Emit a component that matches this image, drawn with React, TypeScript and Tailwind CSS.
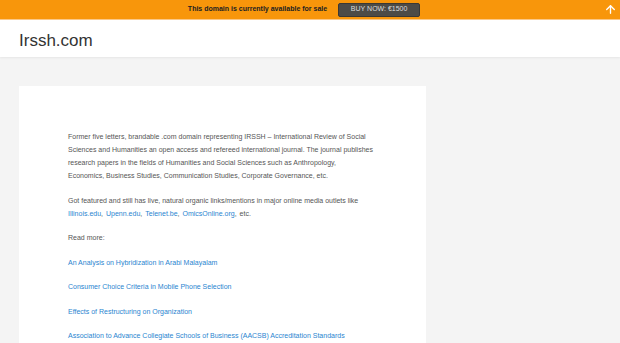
import { ArrowUp } from 'lucide-react';

const links = [
  'An Analysis on Hybridization in Arabi Malayalam',
  'Consumer Choice Criteria in Mobile Phone Selection',
  'Effects of Restructuring on Organization',
  'Association to Advance Collegiate Schools of Business (AACSB) Accreditation Standards',
];

const outlets = ['Illinois.edu', 'Upenn.edu', 'Telenet.be', 'OmicsOnline.org'];

export default function App() {
  return (
    <div className="min-h-[343px] bg-[#f4f4f4] font-['Liberation_Sans',Arial,sans-serif]">
      {/* sale banner */}
      <div className="relative h-[20px] bg-[#f8960b] flex items-center justify-center gap-[11px] pr-[12px] border-b border-[#fbc888]">
        <span className="text-[7px] font-bold text-[#222]">This domain is currently available for sale</span>
        <span className="h-[14px] w-[82px] flex items-center justify-center bg-[#4d4b47] border border-[#3a3835] rounded-[2px] text-[7px] text-[#ddd]">
          BUY NOW: €1500
        </span>
        <ArrowUp className="absolute right-[3px] top-[3px] w-[13px] h-[13px] text-white" strokeWidth={2.5} />
      </div>

      {/* site header */}
      <div className="h-[37px] bg-white flex items-center pl-[19px] pt-[3px] shadow-[0_1px_2px_rgba(0,0,0,0.06)]">
        <h1 className="text-[17px] text-[#333] leading-none">Irssh.com</h1>
      </div>

      <div className="pt-[29px] pl-[19px]">
        <div className="w-[407px] bg-white pt-[44px] pl-[49px] pr-[52px] pb-[20px] text-[7px] leading-[13px] text-[#555]">
          <p className="mb-[11.5px]">
            Former five letters, brandable .com domain representing IRSSH – International Review of Social Sciences and
            Humanities an open access and refereed international journal. The journal publishes research papers in the
            fields of Humanities and Social Sciences such as Anthropology, Economics, Business Studies, Communication
            Studies, Corporate Governance, etc.
          </p>
          <p className="mb-[11.5px]">
            Got featured and still has live, natural organic links/mentions in major online media outlets like{' '}
            {outlets.map((o) => (
              <span key={o} className="mr-[3px]">
                <a className="text-[#2a85d0]">{o}</a>,
              </span>
            ))}
            etc.
          </p>
          <p className="mb-[11.5px]">Read more:</p>
          {links.map((l) => (
            <p key={l} className="mb-[11.5px]">
              <a className="text-[#2a85d0]">{l}</a>
            </p>
          ))}
        </div>
      </div>
    </div>
  );
}
